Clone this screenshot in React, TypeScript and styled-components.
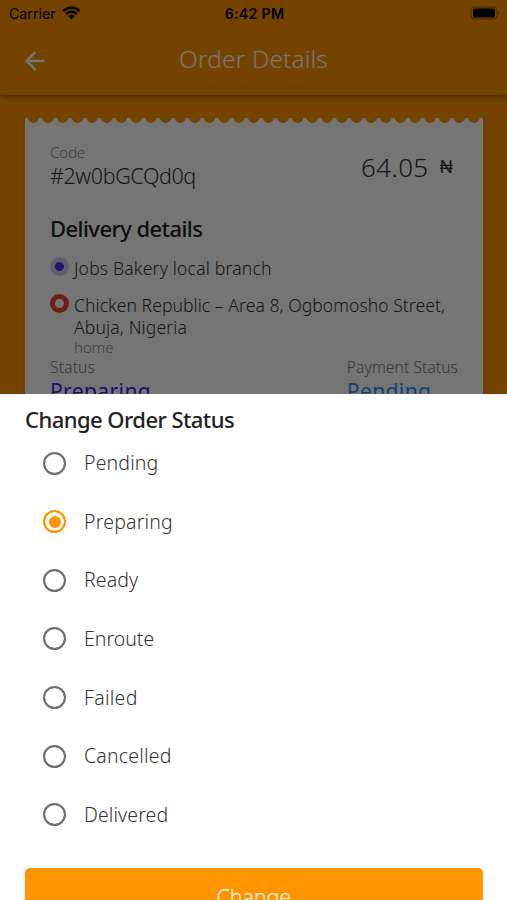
import React from "react";
import styled, { createGlobalStyle } from "styled-components";

const GlobalStyle = createGlobalStyle`
  * { box-sizing: border-box; }
  html, body { margin: 0; height: 100%; overflow: hidden; }
  body { font-family: "Noto Sans", "Open Sans", sans-serif; }
`;

const Screen = styled.div`
  position: relative;
  width: 507px;
  height: 900px;
  overflow: hidden;
  background: #ff9300;
`;

const Text = styled.div<{ $size: number; $line: number; $color?: string; $weight?: number; $spacing?: number }>`
  font-size: ${(p) => p.$size}px;
  line-height: ${(p) => p.$line}px;
  color: ${(p) => p.$color ?? "#333"};
  font-weight: ${(p) => p.$weight ?? 300};
  letter-spacing: ${(p) => p.$spacing ?? 0}px;
  white-space: pre;
`;

const Header = styled.header`
  height: 95px;
  box-shadow: 0 2px 5px rgba(0, 0, 0, 0.4);
`;

const StatusBar = styled.div`
  display: grid;
  grid-template-columns: 1fr auto 1fr;
  align-items: center;
  height: 27px;
  padding: 0 7px 0 9px;
  font: 400 14.2px/27px Inter, sans-serif;
  color: #000;
`;

const Carrier = styled.div`
  display: flex;
  align-items: center;
  gap: 6px;

  svg { margin-top: -2px; }
`;

const Clock = styled.div`
  font-weight: 600;
  letter-spacing: 0.25px;
`;

const BatteryIcon = styled.svg`
  justify-self: end;
  margin-top: -1px;
`;

const NavBar = styled.div`
  display: grid;
  grid-template-columns: 80px 1fr 80px;
  align-items: center;
  height: 66px;
  padding: 0 0 0 25px;

  svg { margin-top: 2px; }
`;

const NavTitle = styled(Text)`
  margin-top: -2px;
  padding-right: 25px;
  text-align: center;
`;

const Ticket = styled.main`
  width: 457.5px;
  margin: 23px 0 0 25px;
`;

const ScallopEdge = styled.div`
  height: 5px;
  background: radial-gradient(circle 8px at 50% -0.8px, transparent 5.3px, #fff 6.1px) 1px 0 / 14.7px 5px;
`;

const TicketBody = styled.div`
  height: 500px;
  padding: 20px 24.5px 0 25px;
  background: #fff;
`;

const Summary = styled.section`
  display: flex;
  justify-content: space-between;
`;

const Amount = styled.div`
  display: flex;
  align-items: center;
  gap: 11px;
  padding: 0 5px 0 0;
`;

const Currency = styled(Text)`
  font-family: Inter, sans-serif;
`;

const SectionTitle = styled(Text)`
  margin-top: 24px;
`;

const Place = styled.div<{ $gap: number }>`
  display: grid;
  grid-template-columns: 18px 1fr;
  column-gap: 6px;
  margin-top: ${(p) => p.$gap}px;
`;

const Origin = styled.div`
  width: 19px;
  height: 19px;
  border: 5px solid #d4cff2;
  border-radius: 50%;
  background: #4536f0;
`;

const Destination = styled.div`
  width: 19px;
  height: 19px;
  border: 5px solid #f44336;
  border-radius: 50%;
`;

const Statuses = styled.section`
  display: flex;
  justify-content: space-between;
`;

const Scrim = styled.div`
  position: absolute;
  inset: 0;
  background: rgba(0, 0, 0, 0.54);
`;

const Sheet = styled.section`
  position: absolute;
  left: 0;
  right: 0;
  bottom: 0;
  height: 506px;
  padding: 10px 24.5px 0 25px;
  background: #fff;
`;

const Options = styled.div`
  height: 434px;
  padding: 18px 0 0 18px;
`;

const Option = styled.label`
  display: flex;
  align-items: center;
  gap: 18px;
  height: 22px;
  margin-bottom: 36.65px;
`;

const Radio = styled.span<{ $on: boolean }>`
  display: grid;
  place-items: center;
  width: 23px;
  height: 23px;
  border: 2.5px solid ${(p) => (p.$on ? "#ff9300" : "#707070")};
  outline: 0.4px solid ${(p) => (p.$on ? "#ff9300" : "#707070")};
  outline-offset: -2.7px;
  border-radius: 50%;

  &::after {
    content: "";
    width: 12px;
    height: 12px;
    border-radius: 50%;
    background: ${(p) => (p.$on ? "#ff9300" : "transparent")};
  }
`;

const ChangeButton = styled.button`
  display: block;
  width: 100%;
  height: 58px;
  padding: 0;
  border: 0;
  border-radius: 5px;
  background: #ff9300;
  font-family: inherit;
`;

const options = [
  { name: "Pending", spacing: 0.15 },
  { name: "Preparing", spacing: 0.2 },
  { name: "Ready", spacing: 0.1 },
  { name: "Enroute", spacing: 0 },
  { name: "Failed", spacing: 0.3 },
  { name: "Cancelled", spacing: 0.2 },
  { name: "Delivered", spacing: 0.1 },
];

export default function App() {
  return (
    <>
      <GlobalStyle />
      <Screen>
        <Header>
          <StatusBar>
            <Carrier>
              Carrier
              <svg width="19" height="14" viewBox="0 0 19 14" fill="none" stroke="#000" strokeWidth="2.5">
                <path d="M1.3 5.1Q9.5 -2 17.7 5.1M4.1 8Q9.5 3.3 14.9 8" />
                <path d="M6.2 10.1Q9.5 7.4 12.8 10.1L9.5 13.5Z" fill="#000" stroke="none" />
              </svg>
            </Carrier>
            <Clock>6:42 PM</Clock>
            <BatteryIcon width="30" height="14" viewBox="0 0 30 14">
              <rect x="1" y="1" width="26" height="12" rx="3.5" fill="none" stroke="#000" strokeOpacity=".4" />
              <rect x="3" y="2.5" width="22" height="9" rx="2" />
              <path d="M28.2 5Q30 7 28.2 9Z" fillOpacity=".5" />
            </BatteryIcon>
          </StatusBar>
          <NavBar>
            <svg width="20" height="20" viewBox="0 0 20 20" fill="none" stroke="#fff" strokeWidth="2.5">
              <path d="M19.5 10H2M10.5 1L1.7 10l8.8 9" />
            </svg>
            <NavTitle $size={24.5} $line={34} $color="#fff" $spacing={0.1}>Order Details</NavTitle>
          </NavBar>
        </Header>
        <Ticket>
          <ScallopEdge />
          <TicketBody>
            <Summary>
              <div>
                <Text $size={15.3} $line={19} $color="#8b8b8b" $spacing={-0.3}>Code</Text>
                <Text $size={21.5} $line={28} $spacing={-0.4}>#2w0bGCQd0q</Text>
              </div>
              <Amount>
                <Text $size={26} $line={32} $spacing={0.35}>64.05</Text>
                <Currency $size={17.5} $line={32} $weight={400}>₦</Currency>
              </Amount>
            </Summary>
            <SectionTitle $size={22} $line={29} $color="#222" $weight={500} $spacing={-0.56}>Delivery details</SectionTitle>
            <Place $gap={14}>
              <Origin />
              <Text $size={17.6} $line={22} $weight={360} $spacing={0.16}>Jobs Bakery local branch</Text>
            </Place>
            <Place $gap={15}>
              <Destination />
              <div>
                <Text $size={17.6} $line={22} $weight={360} $spacing={0.03}>Chicken Republic – Area 8, Ogbomosho Street,</Text>
                <Text $size={17.6} $line={22} $weight={360} $spacing={0.12}>Abuja, Nigeria</Text>
                <Text $size={15} $line={19} $color="#8b8b8b">home</Text>
              </div>
            </Place>
            <Statuses>
              <div>
                <Text $size={15.5} $line={20} $color="#777" $spacing={0.2}>Status</Text>
                <Text $size={21} $line={28} $color="#3c20ee" $weight={370} $spacing={0.4}>Preparing</Text>
              </div>
              <div>
                <Text $size={15.5} $line={20} $color="#777" $spacing={0.12}>Payment Status</Text>
                <Text $size={21} $line={28} $color="#2196f3" $weight={370} $spacing={0.4}>Pending</Text>
              </div>
            </Statuses>
          </TicketBody>
        </Ticket>
        <Scrim />
        <Sheet>
          <Text $size={22} $line={30} $color="#222" $weight={500} $spacing={-0.55}>Change Order Status</Text>
          <Options>
            {options.map((o) => (
              <Option key={o.name}>
                <Radio $on={o.name === "Preparing"} />
                <Text $size={19.5} $line={22} $weight={325} $spacing={o.spacing}>{o.name}</Text>
              </Option>
            ))}
          </Options>
          <ChangeButton>
            <Text as="span" $size={21.5} $line={30} $color="#fff" $weight={360} $spacing={-0.1}>Change</Text>
          </ChangeButton>
        </Sheet>
      </Screen>
    </>
  );
}
